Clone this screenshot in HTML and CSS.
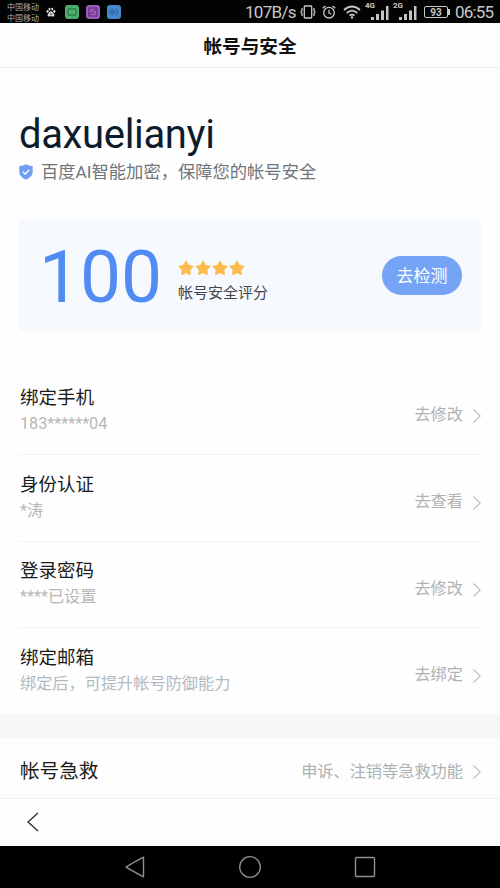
FILE: index.html
```html
<!DOCTYPE html>
<html lang="zh-CN">
<head>
<meta charset="utf-8">
<title>帐号与安全</title>
<link rel="stylesheet" href="styles.css">
</head>
<body>
<svg class="defs" aria-hidden="true">
  <symbol id="chevron" viewBox="0 0 10 16"><path d="M1.5 1.5L8.2 8L1.5 14.5" fill="none" stroke="#bdbdbd" stroke-width="1.1"/></symbol>
  <symbol id="star" viewBox="0 0 16 16"><path d="M8 1.4L10.2 5.4L14.8 6.4L11.7 9.8L12.2 14.4L8 12.5L3.8 14.4L4.3 9.8L1.2 6.4L5.8 5.4Z" fill="#ffbc4d" stroke="#ffbc4d" stroke-width="1.3" stroke-linejoin="round"/></symbol>
  <symbol id="bars" viewBox="0 0 18 15"><path d="M0 11h3v3H0zM5 8h3v6H5zM10 4.500h3V14h-3zM15 0h2.500v14H15z" fill="#c4c4c4"/></symbol>
</svg>

<header class="status">
  <div class="carriers"><span>中国移动</span><span>中国移动</span></div>
  <svg class="paw" viewBox="0 0 12 12" fill="#ddd"><ellipse cx="1.900" cy="5.400" rx="1.300" ry="1.700"/><ellipse cx="4.200" cy="2.500" rx="1.200" ry="1.700"/><ellipse cx="7.500" cy="2.500" rx="1.200" ry="1.700"/><ellipse cx="10" cy="5.400" rx="1.300" ry="1.700"/><path d="M6 5.200C4.500 5.200 4 7 2.700 8C1 9.500 2 11.700 4 11.300C5.500 11 6.500 11 8 11.300C10 11.700 11 9.500 9.300 8C8 7 7.500 5.200 6 5.200Z"/><path d="M5.300 7.500v2.400M7 7.700v2.200" stroke="#111" stroke-width=".7"/></svg>
  <svg class="app" viewBox="0 0 14 14"><rect width="14" height="14" rx="3" fill="#4caf6c"/><path d="M3 4h8v6H3zM5 2.800v1.200M9 10v1.300" fill="none" stroke="#23683a"/></svg>
  <svg class="app" viewBox="0 0 14 14"><rect width="14" height="14" rx="3" fill="#9c5bb8"/><path d="M3 3h8v8H3zM3 10l3-3 2 2M8 6l2-2" fill="none" stroke="#542970"/></svg>
  <svg class="app" viewBox="0 0 14 14"><rect width="14" height="14" rx="3" fill="#4689cc"/><path d="M3 5v4M5 3.500v7M7 5v4M9 3.500q3 3.500 0 7" fill="none" stroke="#245b97"/></svg>
  <span class="speed">107B/s</span>
  <svg class="vibrate" viewBox="0 0 16 14" fill="none" stroke="#c8c8c8" stroke-width="1.300"><rect x="4.300" y="1" width="7.400" height="12" rx=".8"/><path d="M2 3v2.500l-1 1.500 1 1.500V11M14 3v2.500l1 1.500-1 1.500V11"/></svg>
  <svg class="alarm" viewBox="0 0 14 14" fill="none" stroke="#c8c8c8" stroke-width="1.300"><circle cx="7" cy="7.700" r="5.300"/><path d="M7 4.700V8l2.300 1M.8 3.200L3.500.9M13.200 3.200L10.500.9"/></svg>
  <svg class="wifi" viewBox="0 0 18 14" fill="none" stroke="#c8c8c8" stroke-width="1.700"><path d="M1 5Q9-2 17 5M3.800 8Q9 3.400 14.200 8M6.500 10.700Q9 8.500 11.500 10.700"/><circle cx="9" cy="12.500" r="1.200" fill="#c8c8c8" stroke="none"/></svg>
  <div class="signal"><small>4G</small><svg><use href="#bars"/></svg></div>
  <div class="signal second"><small>2G</small><svg><use href="#bars"/></svg></div>
  <div class="battery">93</div>
  <time>06:55</time>
</header>

<h1 class="title">帐号与安全</h1>

<main>
  <section class="account">
    <div class="name">daxuelianyi</div>
    <div class="protect">
      <svg viewBox="0 0 14 16"><path d="M7 .3Q10 2 13.700 2.300V8.500Q13.200 13 7 15.700Q.8 13 .3 8.500V2.300Q4 2 7 .3Z" fill="#6f9ff5"/><path d="M3.800 7.800L6.200 10L10.300 5.900" fill="none" stroke="#fff" stroke-width="1.300"/></svg>
      <span>百度AI智能加密，保障您的帐号安全</span>
    </div>
  </section>

  <section class="score">
    <strong>100</strong>
    <div class="rating">
      <div class="stars"><svg><use href="#star"/></svg><svg><use href="#star"/></svg><svg><use href="#star"/></svg><svg><use href="#star"/></svg></div>
      <span>帐号安全评分</span>
    </div>
    <button type="button">去检测</button>
  </section>

  <section class="list">
    <div class="row"><div class="info"><b>绑定手机</b><span>183******04</span></div><a>去修改</a><svg class="chev"><use href="#chevron"/></svg></div>
    <div class="row"><div class="info"><b>身份认证</b><span>*涛</span></div><a>去查看</a><svg class="chev"><use href="#chevron"/></svg></div>
    <div class="row short"><div class="info"><b>登录密码</b><span>****已设置</span></div><a>去修改</a><svg class="chev"><use href="#chevron"/></svg></div>
    <div class="row"><div class="info"><b>绑定邮箱</b><span class="cool">绑定后，可提升帐号防御能力</span></div><a>去绑定</a><svg class="chev"><use href="#chevron"/></svg></div>
  </section>

  <section class="rescue"><b>帐号急救</b><a>申诉、注销等急救功能</a><svg class="chev"><use href="#chevron"/></svg></section>
</main>

<nav class="toolbar"><svg viewBox="0 0 14 20"><path d="M12 1L2 10L12 19" fill="none" stroke="#333" stroke-width="1.400"/></svg></nav>

<footer class="system">
  <svg viewBox="0 0 22 24"><path d="M19.500 2.200V21.800Q10 17 2 12.200Q10 7 19.500 2.200Z" fill="none" stroke="#909090" stroke-width="1.400" stroke-linejoin="round"/></svg>
  <svg viewBox="0 0 22 24"><circle cx="11" cy="12" r="10.300" fill="none" stroke="#909090" stroke-width="1.300"/></svg>
  <svg viewBox="0 0 22 24"><rect x="1.500" y="2.500" width="19" height="19" rx="1" fill="none" stroke="#909090" stroke-width="1.400"/></svg>
</footer>
</body>
</html>
```
FILE: styles.css
```css
* { box-sizing: border-box; }
body {
  margin: 0;
  width: 500px;
  height: 888px;
  overflow: hidden;
  display: flex;
  flex-direction: column;
  background: #fefefe;
  color: #1b1b1b;
  font-family: Roboto, "Noto Sans CJK SC", sans-serif;
}
svg { display: block; flex: none; }
.defs { width: 0; height: 0; position: absolute; }

.status {
  height: 23px;
  flex: none;
  display: flex;
  align-items: center;
  background: #030303;
  color: #c8c8c8;
  padding-left: 7px;
  white-space: nowrap;
}
.carriers { width: 32px; display: flex; flex-direction: column; font-size: 8px; line-height: 11px; color: #aaa; padding-top: 2px; }
.paw { width: 10px; height: 10px; margin: 1px 9px 0 7px; }
.app { width: 14px; height: 14px; margin-right: 7px; }
.speed { font-size: 17px; width: 51px; margin-left: 117px; letter-spacing: -.7px; }
.vibrate { width: 16px; height: 14px; margin-left: 4px; }
.alarm { width: 14px; height: 14px; margin-left: 6px; }
.wifi { width: 18px; height: 14px; margin-left: 7px; }
.signal { display: flex; height: 18px; width: 27px; margin-left: 4px; align-items: flex-end; }
.signal small { font-size: 8px; line-height: 8px; font-weight: 700; align-self: flex-start; width: 10px; margin: -1px -4px 0 0; }
.signal svg { width: 18px; height: 15px; }
.signal.second { margin-left: 1px; }
.battery {
  position: relative;
  width: 24px;
  height: 12px;
  border: 1px solid #c8c8c8;
  border-radius: 2px;
  font-size: 10px;
  line-height: 11px;
  font-weight: 700;
  text-align: center;
  margin-left: 4px;
}
.battery::after { content: ""; position: absolute; right: -3px; top: 2px; width: 2px; height: 6px; background: #c8c8c8; }
time { font-size: 17px; letter-spacing: -.8px; margin-left: 7px; }

.title {
  height: 45px;
  flex: none;
  margin: 0;
  border-bottom: 1px solid #f0f0f0;
  text-align: center;
  font-size: 18.6px;
  line-height: 48px;
  font-weight: 700;
  color: #111;
}
.account { height: 151px; padding: 41px 19px 0; }
.name { font-size: 40px; line-height: 51px; letter-spacing: -.35px; color: #0d1b2a; }
.protect { display: flex; align-items: center; gap: 8px; font-size: 17.3px; line-height: 25px; color: #70757c; white-space: nowrap; }
.protect svg { width: 14px; height: 16px; margin-top: -1px; }

.score { height: 112px; margin: 0 19px; background: #f6fafe; display: flex; align-items: center; padding: 0 19px 0 20px; }
.score strong { width: 139px; padding-top: 4px; font-weight: 400; font-size: 73px; line-height: 80px; color: #508cf2; }
.rating { font-size: 15px; line-height: 22px; color: #41464c; padding-top: 13px; }
.stars { display: flex; gap: 1px; margin-bottom: 6px; }
.stars svg { width: 16px; height: 16px; }
.score button {
  margin-left: auto;
  width: 80px;
  height: 39px;
  padding: 0 0 2px;
  border: 0;
  border-radius: 20px;
  background: #75a4f7;
  color: #fff;
  font: 17px Roboto, "Noto Sans CJK SC", sans-serif;
}

.list { padding: 37px 18px 0 19px; }
.row { height: 87px; display: flex; align-items: center; border-bottom: 1px solid #f2f2f2; }
.row.short { height: 86px; }
.row:last-child { height: 86px; border-bottom: 0; }
.info { flex: 1; display: flex; flex-direction: column; padding: 0 0 4px 1px; }
.info b { font-size: 18.5px; line-height: 28px; font-weight: 400; }
.info span { font-size: 16.2px; line-height: 23px; color: #b7b7b7; }
.info .cool { color: #b2b9c0; }
.row a, .rescue a { font-size: 16.2px; line-height: 24px; color: #b2b2b2; margin-right: 9px; }
.row a { padding-top: 8px; }
.chev { width: 10px; height: 16px; }
.row .chev { margin-top: 10px; }

.rescue { height: 85px; border-top: 24px solid #f6f6f6; border-bottom: 1px solid #f0f0f0; padding: 4px 18px 0 20px; display: flex; align-items: center; }
.rescue b { flex: 1; font-size: 19.6px; font-weight: 400; padding-bottom: 1px; }
.rescue a { color: #abb1b5; padding-top: 3px; }
.rescue .chev { margin-top: 4px; }

.toolbar { flex: 1; padding: 13px 26px; }
.toolbar svg { width: 14px; height: 20px; }
.system { height: 42px; flex: none; background: #000; display: flex; justify-content: center; align-items: center; gap: 93px; }
.system svg { width: 22px; height: 24px; }
```
